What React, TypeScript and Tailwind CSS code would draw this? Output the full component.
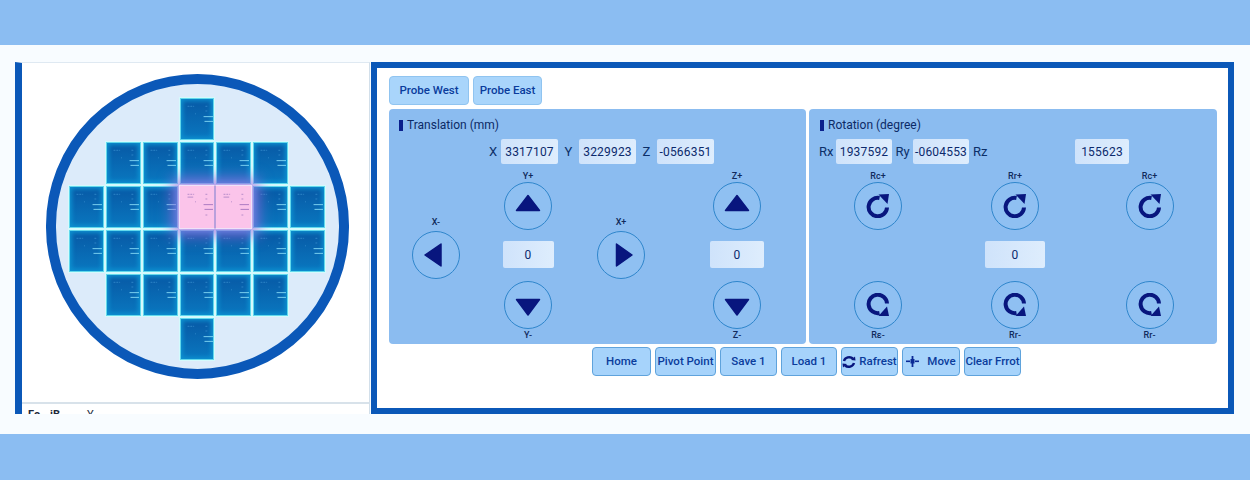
import React from "react";

const font = { fontFamily: 'Roboto, "Noto Sans", sans-serif' };

function DieMarks({ pink }: { pink?: boolean }) {
  const c = pink ? "#b48ac8" : "#2f86c8";
  const l = pink ? "#a878c0" : "#7ed4f2";
  return (
    <svg className="absolute inset-0 h-full w-full" viewBox="0 0 37 44" fill={c}>
      <rect x="8" y="8" width="2" height="1" />
      <rect x="11" y="8" width="2" height="1" />
      <rect x="14" y="8" width="1" height="1" />
      <rect x="27" y="8" width="2" height="1" />
      <rect x="27" y="13" width="2" height="1" />
      <rect x="16" y="16" width="1" height="1" />
      <rect x="25" y="19" width="10" height="1" fill={l} />
      <rect x="26" y="24" width="9" height="1" fill={l} />
      {pink && <rect x="8" y="11" width="6" height="1" />}
      {pink && <rect x="27" y="30" width="2" height="1" />}
    </svg>
  );
}

function Die({ className }: { className?: string }) {
  return (
    <div
      className={
        "relative border border-[#d4fafc] bg-gradient-to-b from-[#0858a4] to-[#0a78c0] shadow-[inset_0_0_0_1px_#62d8ec,inset_0_0_4px_3px_#0c90d0] " +
        (className ?? "")
      }
    >
      <DieMarks />
    </div>
  );
}

function PinkPair() {
  return (
    <div className="relative z-10 col-span-2 col-start-4 grid grid-cols-2 shadow-[0_0_13px_7px_rgba(165,105,225,0.7)]">
      <div className="relative border border-[#efe2f8] border-r-[#b9a0dc] bg-[#fbc4ea]">
        <DieMarks pink />
      </div>
      <div className="relative border border-[#efe2f8] border-l-[#b9a0dc] bg-[#fbc4ea]">
        <DieMarks pink />
      </div>
    </div>
  );
}

function Wafer() {
  return (
    <div className="flex h-[305px] w-[303px] items-center justify-center rounded-full border-[10px] border-[#0b58b8] bg-[#dcebfa]">
      <div className="mt-[5px] grid h-[264px] w-[258px] grid-cols-7 grid-rows-6">
        <Die className="col-start-4" />

        <Die className="col-start-2" />
        <Die className="col-start-3" />
        <Die className="col-start-4" />
        <Die className="col-start-5" />
        <Die className="col-start-6" />

        <Die className="col-start-1" />
        <Die className="col-start-2" />
        <Die className="col-start-3" />
        <PinkPair />
        <Die className="col-start-6" />
        <Die className="col-start-7" />

        <Die className="col-start-1" />
        <Die className="col-start-2" />
        <Die className="col-start-3" />
        <Die className="col-start-4" />
        <Die className="col-start-5" />
        <Die className="col-start-6" />
        <Die className="col-start-7" />

        <Die className="col-start-2" />
        <Die className="col-start-3" />
        <Die className="col-start-4" />
        <Die className="col-start-5" />
        <Die className="col-start-6" />

        <Die className="col-start-4" />
      </div>
    </div>
  );
}

function Field({ value, className }: { value: string; className: string }) {
  return (
    <div
      className={
        "flex items-center justify-center rounded-[2px] bg-gradient-to-r from-[#cfe3fb] to-[#deedfd] text-[12px] tracking-[0.2px] text-[#0c2a6c] " +
        className
      }
    >
      {value}
    </div>
  );
}

function Round({ children }: { children: React.ReactNode }) {
  return (
    <div className="flex h-[48px] w-[48px] items-center justify-center rounded-full border border-[#2f86cc] bg-[#8fc0f2]">
      {children}
    </div>
  );
}

function Tri({ dir }: { dir: "up" | "down" | "left" | "right" }) {
  const pts = {
    up: "12,1.5 23.5,16.5 0.5,16.5",
    down: "0.5,6.5 23.5,6.5 12,22",
    left: "17,1 17,23 1,12",
    right: "7.5,1 7.5,23 23,12",
  }[dir];
  return (
    <svg width="24" height="24" viewBox="0 0 24 24" className="overflow-visible">
      <polygon points={pts} fill="#08167e" stroke="#08167e" strokeWidth="1.5" strokeLinejoin="round" />
    </svg>
  );
}

function Ccw() {
  return (
    <svg width="24" height="24" viewBox="0 0 24 24" fill="none">
      <path d="M13.5 4 A9.2 9.2 0 1 0 21 13.5" stroke="#08167e" strokeWidth="4" />
      <polygon points="12.5,0.5 23,0 21.5,10" fill="#08167e" />
    </svg>
  );
}

function Cw() {
  return (
    <svg width="24" height="24" viewBox="0 0 24 24" fill="none">
      <path d="M21 10.5 A9.2 9.2 0 1 0 13.5 20" stroke="#08167e" strokeWidth="4" />
      <polygon points="23,23 12.5,23 21,13.5" fill="#08167e" />
    </svg>
  );
}

function Tiny({ children }: { children: React.ReactNode }) {
  return <div className="h-[12px] text-[9px] font-medium leading-[12px] text-[#102a5c]">{children}</div>;
}

function Title({ children }: { children: React.ReactNode }) {
  return (
    <div className="flex h-[14px] items-center gap-[4px] text-[12px] text-[#0c2a66]">
      <span className="h-[11px] w-[4px] bg-[#0a1f8c]" />
      {children}
    </div>
  );
}

function Axis({ children, className }: { children: React.ReactNode; className: string }) {
  return <span className={"text-[13px] text-[#0c2f68] " + className}>{children}</span>;
}

function Btn({ children, className }: { children: React.ReactNode; className: string }) {
  return (
    <div
      className={
        "flex h-[29px] items-center justify-center whitespace-nowrap rounded-[4px] border border-[#5fa3dc] bg-[#a6d3fb] text-[11.5px] font-medium text-[#0a3c9c] " +
        className
      }
    >
      {children}
    </div>
  );
}

function Arrow({
  label,
  dir,
  below,
  className,
}: {
  label: string;
  dir: "up" | "down" | "left" | "right";
  below?: boolean;
  className?: string;
}) {
  return (
    <div className={"flex flex-col items-center " + (className ?? "")}>
      {!below && <Tiny>{label}</Tiny>}
      <Round>
        <Tri dir={dir} />
      </Round>
      {below && <Tiny>{label}</Tiny>}
    </div>
  );
}

function RotTop({ label }: { label: string }) {
  return (
    <div className="flex flex-col items-center">
      <Tiny>{label}</Tiny>
      <Round>
        <Ccw />
      </Round>
    </div>
  );
}

function RotBottom({ label }: { label: string }) {
  return (
    <div className="flex flex-col items-center">
      <Round>
        <Cw />
      </Round>
      <Tiny>{label}</Tiny>
    </div>
  );
}

export default function App() {
  return (
    <div className="flex h-[480px] w-[1250px] flex-col overflow-hidden bg-[#f8fcff]" style={font}>
      <div className="h-[45px] bg-[#8bbdf2]" />
      <div className="flex h-[389px] gap-[1px] pl-[15px] pt-[17px]">
        {/* Left panel */}
        <div className="flex h-[352px] w-[355px] flex-col overflow-hidden border-l-[7px] border-r border-t border-[#0b58b8] border-r-[#d2dfea] border-t-[#dfe9f2] bg-white">
          <div className="flex h-[339px] flex-none justify-center pl-[3px] pt-[11px]">
            <Wafer />
          </div>
          <div className="h-[2px] flex-none bg-[#d8e2ea]" />
          <div className="flex flex-none pl-[6px] pt-[5px] text-[11px] font-bold leading-[12px] text-[#20283a]">
            <span className="w-[22px]">Fo</span>
            <span className="w-[37px]">iB</span>
            <span className="font-normal">Y</span>
          </div>
        </div>

        {/* Right panel */}
        <div className="flex h-[352px] w-[863px] flex-col border-[6px] border-[#0b58b8] bg-white pl-[12px] pr-[11px] pt-[8px]">
          <div className="flex h-[28px] gap-[4px]">
            <Btn className="w-[80px] border-[#90c4f0] bg-[#a9d5fb]">Probe West</Btn>
            <Btn className="w-[69px] border-[#90c4f0] bg-[#a9d5fb]">Probe East</Btn>
          </div>

          <div className="mt-[5px] flex h-[235px] gap-[3px]">
            {/* Translation */}
            <div className="flex w-[417px] flex-col rounded-[4px] bg-[#8bbcf0] pt-[9px]">
              <div className="pl-[10px]">
                <Title>Translation (mm)</Title>
              </div>
              <div className="mt-[7px] flex h-[25px] items-center pl-[96px]">
                <Axis className="w-[16px] text-center">X</Axis>
                <Field value="3317107" className="h-[25px] w-[57px]" />
                <Axis className="w-[21px] text-center">Y</Axis>
                <Field value="3229923" className="h-[25px] w-[57px]" />
                <Axis className="w-[21px] text-center">Z</Axis>
                <Field value="-0566351" className="h-[25px] w-[57px]" />
              </div>
              <div className="mt-[6px] grid grid-cols-[94px_90px_96px_136px]">
                <div className="flex flex-col items-center pt-[46px]">
                  <Arrow label="X-" dir="left" className="gap-[3px]" />
                </div>
                <div className="flex flex-col items-center">
                  <Arrow label="Y+" dir="up" />
                  <Field value="0" className="mb-[13px] mt-[11px] h-[27px] w-[51px]" />
                  <Arrow label="Y-" dir="down" below />
                </div>
                <div className="flex flex-col items-center pt-[46px]">
                  <Arrow label="X+" dir="right" className="gap-[3px]" />
                </div>
                <div className="flex flex-col items-center">
                  <Arrow label="Z+" dir="up" />
                  <Field value="0" className="mb-[13px] mt-[11px] h-[27px] w-[54px]" />
                  <Arrow label="Z-" dir="down" below />
                </div>
              </div>
            </div>

            {/* Rotation */}
            <div className="flex w-[408px] flex-col rounded-[4px] bg-[#8bbcf0] pt-[9px]">
              <div className="pl-[11px]">
                <Title>Rotation (degree)</Title>
              </div>
              <div className="mt-[7px] flex h-[25px] items-center pl-[10px]">
                <Axis className="w-[17px]">Rx</Axis>
                <Field value="1937592" className="h-[25px] w-[56px]" />
                <Axis className="w-[21px] text-center">Ry</Axis>
                <Field value="-0604553" className="h-[25px] w-[56px]" />
                <Axis className="w-[106px] pl-[4px]">Rz</Axis>
                <Field value="155623" className="h-[25px] w-[54px]" />
              </div>
              <div className="mt-[6px] grid grid-cols-[138px_136px_133px] justify-items-center">
                <div className="flex flex-col items-center">
                  <RotTop label="Rc+" />
                  <div className="h-[51px]" />
                  <RotBottom label="Rε-" />
                </div>
                <div className="flex flex-col items-center">
                  <RotTop label="Rr+" />
                  <Field value="0" className="mb-[13px] mt-[11px] h-[27px] w-[60px]" />
                  <RotBottom label="Rr-" />
                </div>
                <div className="flex flex-col items-center">
                  <RotTop label="Rc+" />
                  <div className="h-[51px]" />
                  <RotBottom label="Rr-" />
                </div>
              </div>
            </div>
          </div>

          <div className="mt-[3px] flex gap-[4px] pl-[203px]">
            <Btn className="w-[59px]">Home</Btn>
            <Btn className="w-[61px]">Pivot Point</Btn>
            <Btn className="w-[57px]">Save 1</Btn>
            <Btn className="w-[56px]">Load 1</Btn>
            <Btn className="w-[57px] gap-[3px]">
              <svg width="14" height="14" viewBox="0 0 14 14" fill="none" stroke="#08167e" strokeWidth="2.4">
                <path d="M2 6 A5.5 5 0 0 1 11 3.5" />
                <path d="M12 8 A5.5 5 0 0 1 3 10.5" />
                <polygon points="9,5 13.5,5.5 13,1.5" fill="#08167e" stroke="none" />
                <polygon points="5,9 0.5,8.5 1,12.5" fill="#08167e" stroke="none" />
              </svg>
              Rafrest
            </Btn>
            <Btn className="w-[58px] gap-[8px]">
              <svg width="13" height="11" viewBox="0 0 13 11" fill="#0a2a96">
                <rect x="0" y="4.5" width="4" height="1.6" />
                <rect x="9" y="4.5" width="4" height="1.6" />
                <rect x="5.6" y="0" width="1.8" height="11" />
                <rect x="4.5" y="3" width="4" height="4.5" />
              </svg>
              Move
            </Btn>
            <Btn className="w-[57px]">Clear Frrot</Btn>
          </div>
        </div>
      </div>
      <div className="h-[46px] bg-[#8bbdf2]" />
    </div>
  );
}
